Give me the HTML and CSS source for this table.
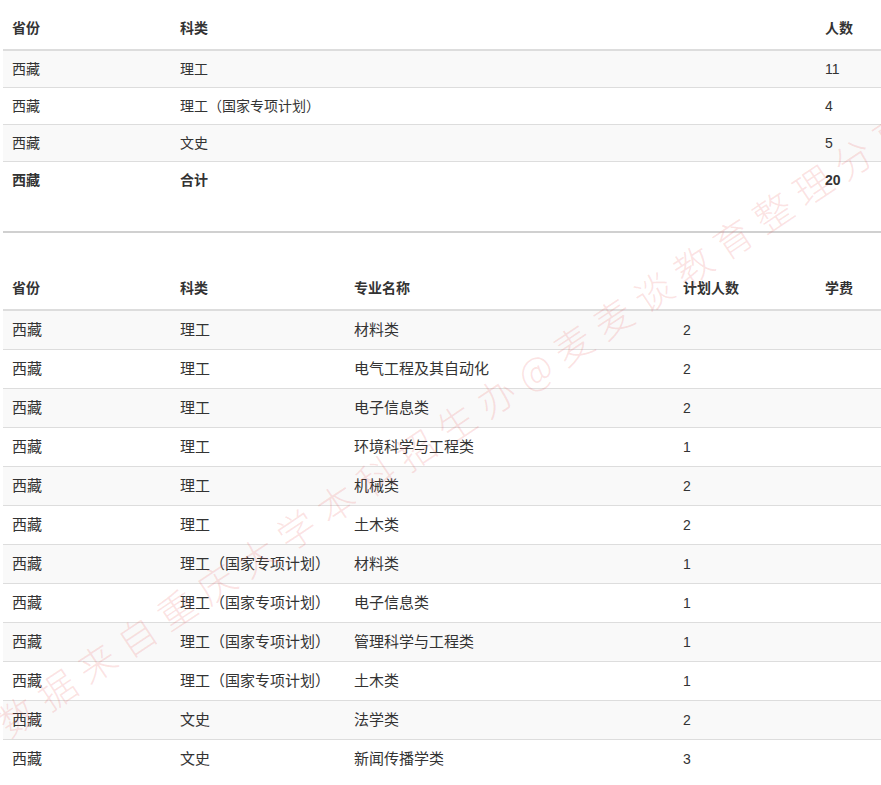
FILE: index.html
```html
<!DOCTYPE html>
<html lang="zh-CN">
<head>
<meta charset="utf-8">
<title>西藏招生计划</title>
<link rel="stylesheet" href="styles.css">
</head>
<body>
<div class="page">
  <table class="data-table summary">
    <colgroup>
      <col class="c-prov"><col class="c-type-wide"><col class="c-count">
    </colgroup>
    <thead>
      <tr><th>省份</th><th>科类</th><th>人数</th></tr>
    </thead>
    <tbody>
      <tr><td>西藏</td><td>理工</td><td>11</td></tr>
      <tr><td>西藏</td><td>理工（国家专项计划）</td><td>4</td></tr>
      <tr><td>西藏</td><td>文史</td><td>5</td></tr>
      <tr class="total"><td>西藏</td><td>合计</td><td>20</td></tr>
    </tbody>
  </table>

  <hr class="divider">

  <table class="data-table detail">
    <colgroup>
      <col class="c-prov"><col class="c-type"><col class="c-major"><col class="c-plan"><col class="c-fee">
    </colgroup>
    <thead>
      <tr><th>省份</th><th>科类</th><th>专业名称</th><th>计划人数</th><th>学费</th></tr>
    </thead>
    <tbody>
      <tr><td>西藏</td><td>理工</td><td>材料类</td><td class="num">2</td><td></td></tr>
      <tr><td>西藏</td><td>理工</td><td>电气工程及其自动化</td><td class="num">2</td><td></td></tr>
      <tr><td>西藏</td><td>理工</td><td>电子信息类</td><td class="num">2</td><td></td></tr>
      <tr><td>西藏</td><td>理工</td><td>环境科学与工程类</td><td class="num">1</td><td></td></tr>
      <tr><td>西藏</td><td>理工</td><td>机械类</td><td class="num">2</td><td></td></tr>
      <tr><td>西藏</td><td>理工</td><td>土木类</td><td class="num">2</td><td></td></tr>
      <tr><td>西藏</td><td>理工（国家专项计划）</td><td>材料类</td><td class="num">1</td><td></td></tr>
      <tr><td>西藏</td><td>理工（国家专项计划）</td><td>电子信息类</td><td class="num">1</td><td></td></tr>
      <tr><td>西藏</td><td>理工（国家专项计划）</td><td>管理科学与工程类</td><td class="num">1</td><td></td></tr>
      <tr><td>西藏</td><td>理工（国家专项计划）</td><td>土木类</td><td class="num">1</td><td></td></tr>
      <tr><td>西藏</td><td>文史</td><td>法学类</td><td class="num">2</td><td></td></tr>
      <tr><td>西藏</td><td>文史</td><td>新闻传播学类</td><td class="num">3</td><td></td></tr>
    </tbody>
  </table>

  <div class="watermark">数据来自重庆大学本科招生办@麦麦谈教育整理分享</div>
</div>
</body>
</html>
```

FILE: styles.css
```css
html, body {
  margin: 0;
  padding: 0;
  background: #fff;
  overflow: hidden;
}

.page {
  position: relative;
  padding-left: 3px;
  height: 785px;
  overflow: hidden;
  font-family: "Liberation Sans", Arial, "Noto Sans CJK SC", sans-serif;
  font-size: 14px;
  color: #333;
}

.data-table {
  width: 878px;
  border-collapse: collapse;
  border-spacing: 0;
  table-layout: fixed;
}

.data-table th,
.data-table td {
  text-align: left;
  padding: 0 0 0 9px;
  line-height: 20px;
  vertical-align: top;
  white-space: nowrap;
}

.data-table th {
  font-weight: bold;
  font-size: 14px;
  padding-top: 18px;
  padding-bottom: 11px;
  border-bottom: 2px solid #ddd;
}

.data-table td {
  border-top: 1px solid #ddd;
}

.data-table tbody tr:nth-child(odd) td {
  background: #f9f9f9;
}

.summary td {
  padding-top: 8px;
  padding-bottom: 8px;
}

.summary tr.total td {
  font-weight: bold;
}

.detail td {
  font-size: 15px;
  padding-top: 9px;
  padding-bottom: 9px;
}

.detail td.num {
  font-size: 14px;
}

.c-prov { width: 168px; }
.c-type-wide { width: 645px; }
.c-count { width: 65px; }
.c-type { width: 174px; }
.c-major { width: 329px; }
.c-plan { width: 142px; }
.c-fee { width: 65px; }

.divider {
  margin: 33px 0 27px 0;
  border: 0;
  height: 2px;
  background: #d0d0d0;
}

.watermark {
  position: absolute;
  left: 458px;
  top: 420px;
  transform: translate(-50%, -50%) rotate(-33.7deg);
  white-space: nowrap;
  font-family: "Noto Sans CJK SC", sans-serif;
  font-weight: 300;
  font-size: 38px;
  letter-spacing: 10px;
  color: rgba(232, 80, 80, 0.16);
  pointer-events: none;
}
```
